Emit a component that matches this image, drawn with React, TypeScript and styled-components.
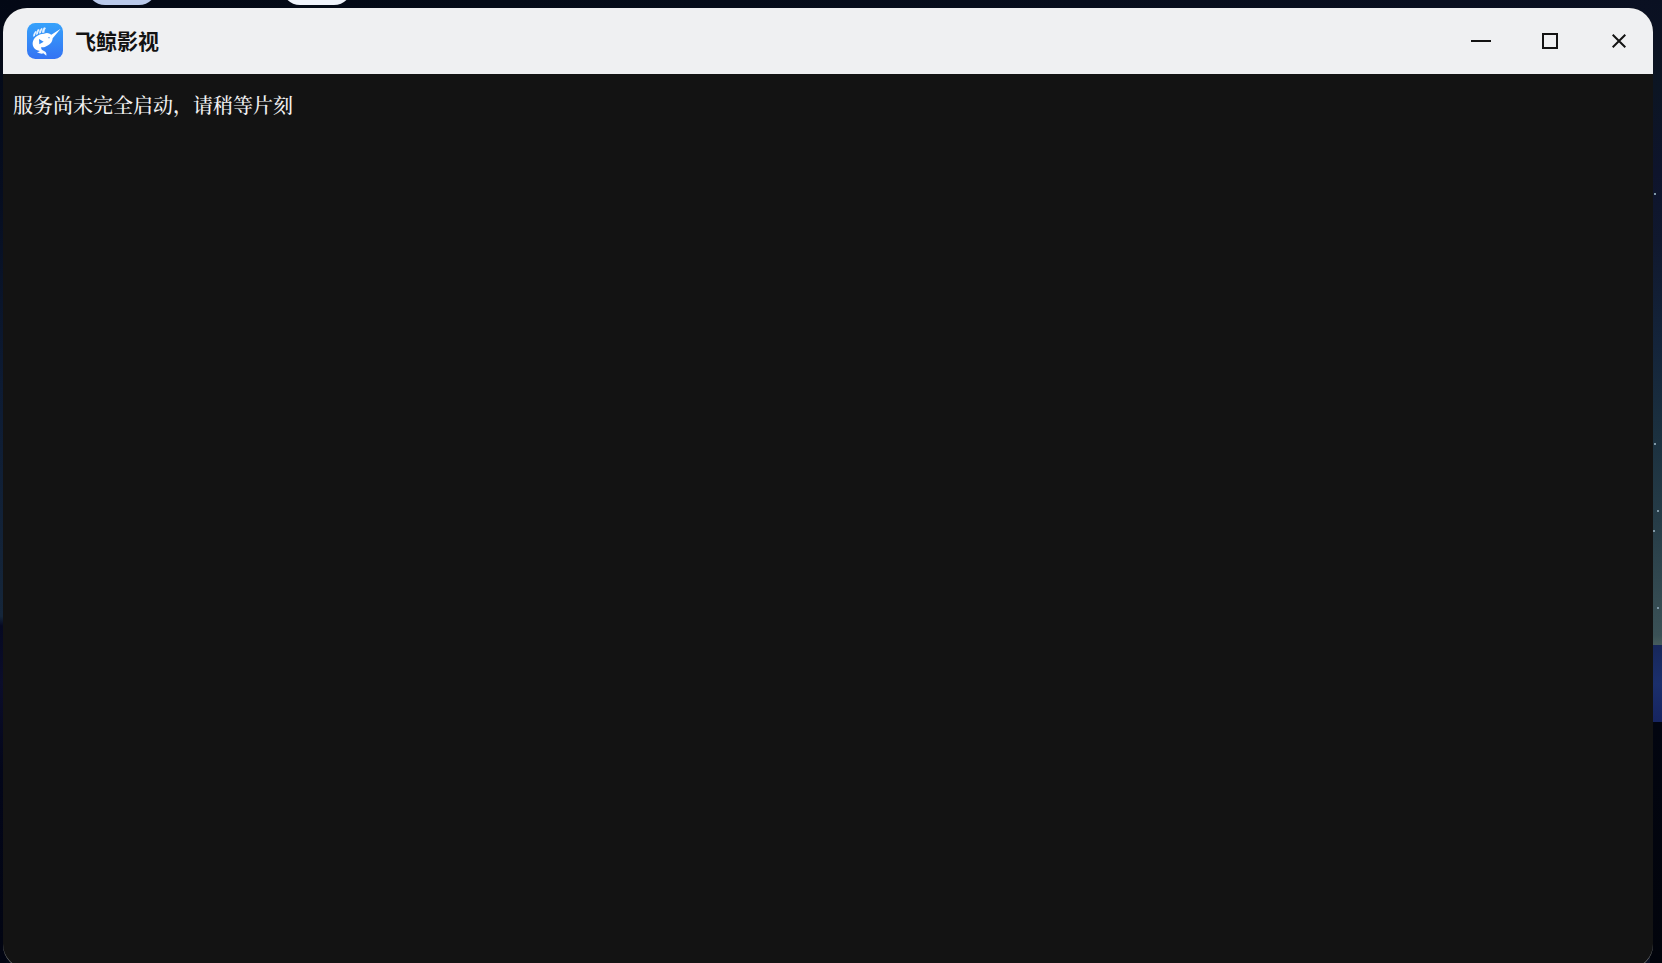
import React from "react";
import styled, { createGlobalStyle } from "styled-components";

const GlobalStyle = createGlobalStyle`
  *, *::before, *::after { box-sizing: border-box; }
  body { margin: 0; background: #020510; }
`;

const Desktop = styled.div`
  position: relative;
  height: 100vh;
  overflow: hidden;
  display: flex;
  padding: 8px 9px 0 3px;
  background:
    linear-gradient(180deg, #0a1022 0%, #0c1523 9%, #0e142c 18%, #10182e 25%, #14243a 36%, #1b303f 45%, #263c47 54%, #3b5156 66%, #465c5c 67%, #17275a 67%, #1b2f6c 71%, #162460 75%, #020510 75%, #02040c 100%) right / 12px 100% no-repeat,
    linear-gradient(180deg, #030815 0%, #060d20 20%, #0d1b33 40%, #15263a 64%, #060922 65%, #0b0d2b 71%, #03061a 80%, #020512 100%) left / 6px 100% no-repeat,
    linear-gradient(90deg, #030815 0%, #040b18 30%, #0a1022 100%);
`;

const DesktopIcon = styled.span<{ $left: number; $color: string }>`
  position: absolute;
  top: -61px;
  left: ${(p) => p.$left}px;
  width: 70px;
  height: 66px;
  border-radius: 18px;
  background: ${(p) => p.$color};
`;

const Star = styled.span<{ $top: number; $right: number }>`
  position: absolute;
  top: ${(p) => p.$top}%;
  right: ${(p) => p.$right}px;
  width: 2px;
  height: 2px;
  background: #7f97a5;
`;

const AppWindow = styled.div`
  position: relative;
  flex: 1;
  display: flex;
  flex-direction: column;
  margin-bottom: -6px;
  border-radius: 24px;
  overflow: hidden;
  background: #131313;
  box-shadow: inset 0 -1px 0 #6a6d70;
`;

const TitleBar = styled.header`
  flex: none;
  display: flex;
  align-items: center;
  height: 66px;
  padding-left: 24px;
  background: #eff0f2;
  color: #131313;
`;

const Title = styled.h1`
  flex: 1;
  margin: 0 0 2px 12px;
  font: 700 21px/32px "Noto Sans CJK SC", sans-serif;
`;

const Controls = styled.div`
  display: flex;
`;

const ControlButton = styled.button`
  display: flex;
  align-items: center;
  justify-content: center;
  width: 69px;
  height: 66px;
  padding: 0;
  border: 0;
  background: none;
  color: #131313;
`;

const Content = styled.main`
  flex: 1;
  padding: 16px 10px;
`;

const Message = styled.p`
  margin: 0;
  color: #f2f2f2;
  font: 500 20px/30px "Noto Serif CJK SC", "Noto Sans CJK SC", serif;
`;

const Logo = () => (
  <svg width="36" height="36" viewBox="21 21 108 108" aria-hidden="true">
    <defs>
      <linearGradient id="tile" x1="0" y1="0" x2="0" y2="1">
        <stop offset="0" stopColor="#36a2fb" />
        <stop offset="1" stopColor="#3473f3" />
      </linearGradient>
      <linearGradient id="fish" x1="0" y1="0" x2="1" y2="1">
        <stop offset="0.5" stopColor="#fff" />
        <stop offset="1" stopColor="#dcebff" />
      </linearGradient>
    </defs>
    <rect x="21" y="21" width="108" height="108" rx="25" fill="url(#tile)" />
    <g fill="#e4f1ff">
      <path d="M39 62 Q40 52 46 45 L50 47 Q45 54 45 60Z" />
      <path d="M48 57 Q48 46 54 39 L59 41 Q54 48 54 54Z" />
      <path d="M57 53 Q57 43 64 36 L68 38 Q63 45 63 51Z" />
      <path d="M66 50 Q66 41 72 34 L78 36 Q72 43 73 50Z" />
    </g>
    <path
      fill="url(#fish)"
      d="M122 38 L98 67 C97 80 88 88 76 92 Q69 95 64 93 C62 99 66 103 72 105 Q81 108 79 119 L70 112 Q64 115 51 109 Q57 108 60 105 C45 102 37 93 38 80 C40 65 54 54 72 53 Q84 48 94 56Z"
    />
    <path d="M57 69 L71 77 L58 85Z" fill="#348bf7" />
    <circle cx="87" cy="65" r="2" fill="#348bf7" />
  </svg>
);

const stars = [
  [20, 6], [46, 6], [53, 3], [55, 7], [63, 3],
];

export default function App() {
  return (
    <>
      <GlobalStyle />
      <Desktop>
        <DesktopIcon $left={87} $color="#b9c9ea" />
        <DesktopIcon $left={282} $color="#f0f4fc" />
        {stars.map(([top, right]) => (
          <Star key={top} $top={top} $right={right} />
        ))}
        <AppWindow>
          <TitleBar>
            <Logo />
            <Title>飞鲸影视</Title>
            <Controls>
              <ControlButton type="button" aria-label="最小化">
                <svg width="20" height="20" viewBox="0 0 20 20">
                  <path d="M0 10H20" stroke="currentColor" strokeWidth="2" />
                </svg>
              </ControlButton>
              <ControlButton type="button" aria-label="最大化">
                <svg width="16" height="16" viewBox="0 0 16 16">
                  <rect x="1" y="1" width="14" height="14" fill="none" stroke="currentColor" strokeWidth="2" />
                </svg>
              </ControlButton>
              <ControlButton type="button" aria-label="关闭">
                <svg width="14" height="14" viewBox="0 0 14 14">
                  <path d="M.7 .7L13.3 13.3M13.3 .7L.7 13.3" stroke="currentColor" strokeWidth="2" />
                </svg>
              </ControlButton>
            </Controls>
          </TitleBar>
          <Content>
            <Message>服务尚未完全启动，请稍等片刻</Message>
          </Content>
        </AppWindow>
      </Desktop>
    </>
  );
}
